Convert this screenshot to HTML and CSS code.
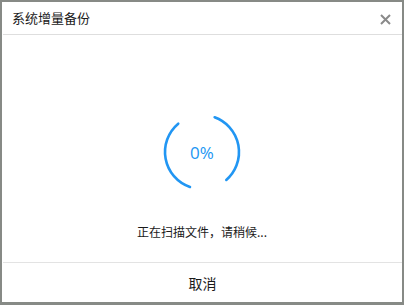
FILE: index.html
```html
<!DOCTYPE html>
<html>
<head>
<meta charset="utf-8">
<link rel="stylesheet" href="styles.css">
</head>
<body>
<div class="dialog">
  <div class="header">
    <span class="title">系统增量备份</span>
    <svg class="close" width="11" height="11" viewBox="0 0 11 11">
      <path d="M1 1L10 10M10 1L1 10" stroke="#8a8a8a" stroke-width="2" fill="none"/>
    </svg>
  </div>
  <div class="content">
    <div class="spinner">
      <svg width="80" height="80" viewBox="0 0 80 80">
        <path d="M27.95 74.98A37 37 0 0 1 16.22 11.66" stroke="#2196f3" stroke-width="2.6" fill="none" stroke-linecap="round"/>
        <path d="M52.65 5.23A37 37 0 0 1 64.28 67.92" stroke="#2196f3" stroke-width="2.6" fill="none" stroke-linecap="round"/>
      </svg>
      <span class="pct">0%</span>
    </div>
    <div class="msg">正在扫描文件，请稍候...</div>
  </div>
  <div class="footer">取消</div>
</div>
</body>
</html>
```
FILE: styles.css
```css
html, body {
  margin: 0;
  padding: 0;
}
body {
  background: #878a86;
  width: 404px;
  height: 305px;
  padding: 2px;
  box-sizing: border-box;
  font-family: "Noto Sans CJK SC", "Noto Sans", sans-serif;
}
.dialog {
  background: #fff;
  width: 400px;
  height: 300px;
  display: flex;
  flex-direction: column;
}
.header {
  height: 32px;
  border-bottom: 1px solid #dedede;
  margin: 0 0 0 1px;
  display: flex;
  align-items: center;
  justify-content: space-between;
  padding: 0 11px 0 9px;
}
.title {
  font-size: 13px;
  color: #1a1a1a;
  line-height: 16px;
}
.close {
  display: block;
  margin-top: 2px;
}
.content {
  flex: 1;
  display: flex;
  flex-direction: column;
  align-items: center;
  padding-top: 77px;
  box-sizing: border-box;
}
.spinner {
  width: 80px;
  height: 80px;
  position: relative;
}
.spinner svg {
  display: block;
}
.pct {
  position: absolute;
  left: 0;
  top: 0;
  width: 80px;
  height: 80px;
  display: flex;
  align-items: center;
  justify-content: center;
  font-size: 17px;
  color: #2196f3;
  font-family: "Open Sans", "Noto Sans", sans-serif;
  font-weight: 400;
}
.msg {
  margin-top: 32px;
  font-size: 12px;
  line-height: 16px;
  color: #1a1a1a;
}
.footer {
  height: 39px;
  border-top: 1px solid #e3e3e3;
  margin-left: 1px;
  display: flex;
  align-items: center;
  justify-content: center;
  font-size: 14px;
  color: #1a1a1a;
}
```
